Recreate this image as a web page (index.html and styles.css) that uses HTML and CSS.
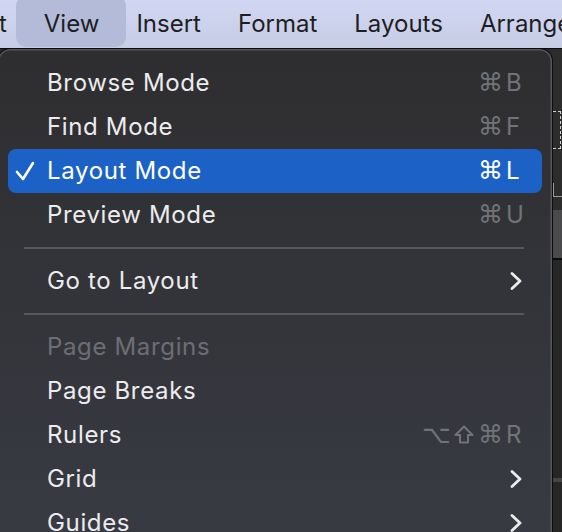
FILE: index.html
```html
<!DOCTYPE html>
<html>
<head>
  <link rel="stylesheet" href="styles.css">
</head>
<body>
  <div class="menubar">
    <span class="menubar-item first">Edit</span>
    <span class="menubar-item active">View</span>
    <span class="menubar-item">Insert</span>
    <span class="menubar-item">Format</span>
    <span class="menubar-item">Layouts</span>
    <span class="menubar-item">Arrange</span>
  </div>

  <div class="workspace">
    <div class="canvas">
      <div class="canvas-page">
        <div class="frame"></div>
        <div class="frame small"></div>
      </div>
      <div class="canvas-band"></div>
      <div class="canvas-dark"></div>
      <div class="canvas-line"></div>
      <div class="canvas-dark rest"></div>
    </div>

    <div class="menu">
      <div class="item">
        <span class="check-slot"></span>
        <span class="label">Browse Mode</span>
        <span class="keys"><span class="key">⌘</span><span class="letter">B</span></span>
      </div>
      <div class="item">
        <span class="check-slot"></span>
        <span class="label">Find Mode</span>
        <span class="keys"><span class="key">⌘</span><span class="letter">F</span></span>
      </div>
      <div class="item selected">
        <span class="check-slot">
          <svg class="check" width="22" height="22" viewBox="0 0 22 22">
            <polyline points="3,12 9,19 19,3" fill="none" stroke="currentColor" stroke-width="2.6" stroke-linecap="round" stroke-linejoin="round"/>
          </svg>
        </span>
        <span class="label">Layout Mode</span>
        <span class="keys"><span class="key">⌘</span><span class="letter">L</span></span>
      </div>
      <div class="item">
        <span class="check-slot"></span>
        <span class="label">Preview Mode</span>
        <span class="keys"><span class="key">⌘</span><span class="letter">U</span></span>
      </div>

      <div class="sep"></div>

      <div class="item">
        <span class="check-slot"></span>
        <span class="label">Go to Layout</span>
        <svg class="chevron" width="12" height="20" viewBox="0 0 12 20">
          <polyline points="2,2.5 10,10 2,17.5" fill="none" stroke="currentColor" stroke-width="2.8" stroke-linecap="round" stroke-linejoin="round"/>
        </svg>
      </div>

      <div class="sep"></div>

      <div class="item disabled">
        <span class="check-slot"></span>
        <span class="label">Page Margins</span>
      </div>
      <div class="item">
        <span class="check-slot"></span>
        <span class="label">Page Breaks</span>
      </div>
      <div class="item">
        <span class="check-slot"></span>
        <span class="label">Rulers</span>
        <span class="keys">
          <span class="key">⌥</span>
          <span class="key">
            <svg class="shift" width="20" height="19" viewBox="0 0 20 19">
              <polygon points="10,1.5 18.5,10 14,10 14,17.5 6,17.5 6,10 1.5,10" fill="none" stroke="currentColor" stroke-width="2" stroke-linejoin="round"/>
            </svg>
          </span>
          <span class="key">⌘</span><span class="letter">R</span>
        </span>
      </div>
      <div class="item">
        <span class="check-slot"></span>
        <span class="label">Grid</span>
        <svg class="chevron" width="12" height="20" viewBox="0 0 12 20">
          <polyline points="2,2.5 10,10 2,17.5" fill="none" stroke="currentColor" stroke-width="2.8" stroke-linecap="round" stroke-linejoin="round"/>
        </svg>
      </div>
      <div class="item">
        <span class="check-slot"></span>
        <span class="label">Guides</span>
        <svg class="chevron" width="12" height="20" viewBox="0 0 12 20">
          <polyline points="2,2.5 10,10 2,17.5" fill="none" stroke="currentColor" stroke-width="2.8" stroke-linecap="round" stroke-linejoin="round"/>
        </svg>
      </div>
    </div>
  </div>
</body>
</html>
```

FILE: styles.css
```css
html, body {
  margin: 0;
  height: 100%;
  overflow: hidden;
}

body {
  background-color: #262626;
  font-family: "Inter", "Noto Sans", sans-serif;
}

/* top menu bar */
.menubar {
  display: flex;
  gap: 37px;
  height: 48px;
  line-height: 48px;
  font-size: 24px;
  color: #1e1e22;
  white-space: nowrap;
  overflow: hidden;
  background: linear-gradient(#d1d7f2, #c7cde5);
}

.menubar-item.first {
  margin-left: -36px;
}

.menubar-item.active {
  position: relative;
  z-index: 0;
}

.menubar-item.active::before {
  content: "";
  position: absolute;
  z-index: -1;
  top: -4px;
  bottom: 1px;
  left: -28px;
  right: -27px;
  border-radius: 10px;
  background-color: #b3bbd9;
}

/* app content behind the menu */
.workspace {
  position: relative;
  height: calc(100% - 48px);
}

.canvas {
  display: flex;
  flex-direction: column;
  height: 100%;
  border-top: 1px solid #0c0c0c;
}

.canvas-page {
  height: 161px;
  background-color: #2c2c2c;
  padding: 62px 0 0 553px;
  box-sizing: border-box;
}

.frame {
  width: 7px;
  height: 36px;
  border: 1px dashed #cfcfcf;
  border-left: none;
}

.frame.small {
  margin-top: 34px;
  width: 8px;
  height: 13px;
  border: none;
  border-left: 1px solid #9a9a9a;
  border-bottom: 1px solid #9a9a9a;
}

.canvas-band {
  height: 48px;
  background-color: #4a4a4d;
  border-bottom: 2px solid #0a0a0a;
}

.canvas-dark {
  height: 218px;
  background-color: #262626;
}

.canvas-line {
  height: 4px;
  background-color: #464648;
}

.canvas-dark.rest {
  flex: 1;
}

/* dropdown */
.menu {
  position: absolute;
  top: 0;
  left: -3px;
  width: 556px;
  height: 520px;
  box-sizing: border-box;
  padding: 12px 10px;
  border: 1px solid #0c0c0e;
  border-bottom: none;
  border-radius: 13px 13px 0 0;
  box-shadow: inset 0 0 0 1.5px #56575b;
  background: linear-gradient(#2e2e30, #393b44);
  color: #ececee;
  font-size: 24px;
}

.item {
  display: flex;
  align-items: center;
  height: 44px;
  line-height: 44px;
  padding: 0 20px 0 6px;
  border-radius: 8px;
  white-space: nowrap;
}

.check-slot {
  display: flex;
  align-items: center;
  width: 33px;
  flex-shrink: 0;
}

.label {
  flex: 1;
  letter-spacing: 0.65px;
}

.item.selected {
  background-color: #1c62c6;
  color: #ffffff;
}

.item.disabled {
  color: #6d6e75;
}

.keys {
  display: flex;
  align-items: center;
  color: #727378;
}

.item.selected .keys {
  color: #ffffff;
}

.key {
  display: flex;
  align-items: center;
  justify-content: center;
  width: 27px;
  height: 44px;
  font-family: "DejaVu Sans", sans-serif;
  font-size: 25px;
}

.shift {
  margin-top: -1px;
}

.letter {
  width: 16px;
  margin-left: 2px;
  text-align: left;
}

.chevron {
  color: #ececee;
}

.sep {
  height: 2px;
  margin: 10px 18px 10px 16px;
  background-color: #56575c;
}
```
